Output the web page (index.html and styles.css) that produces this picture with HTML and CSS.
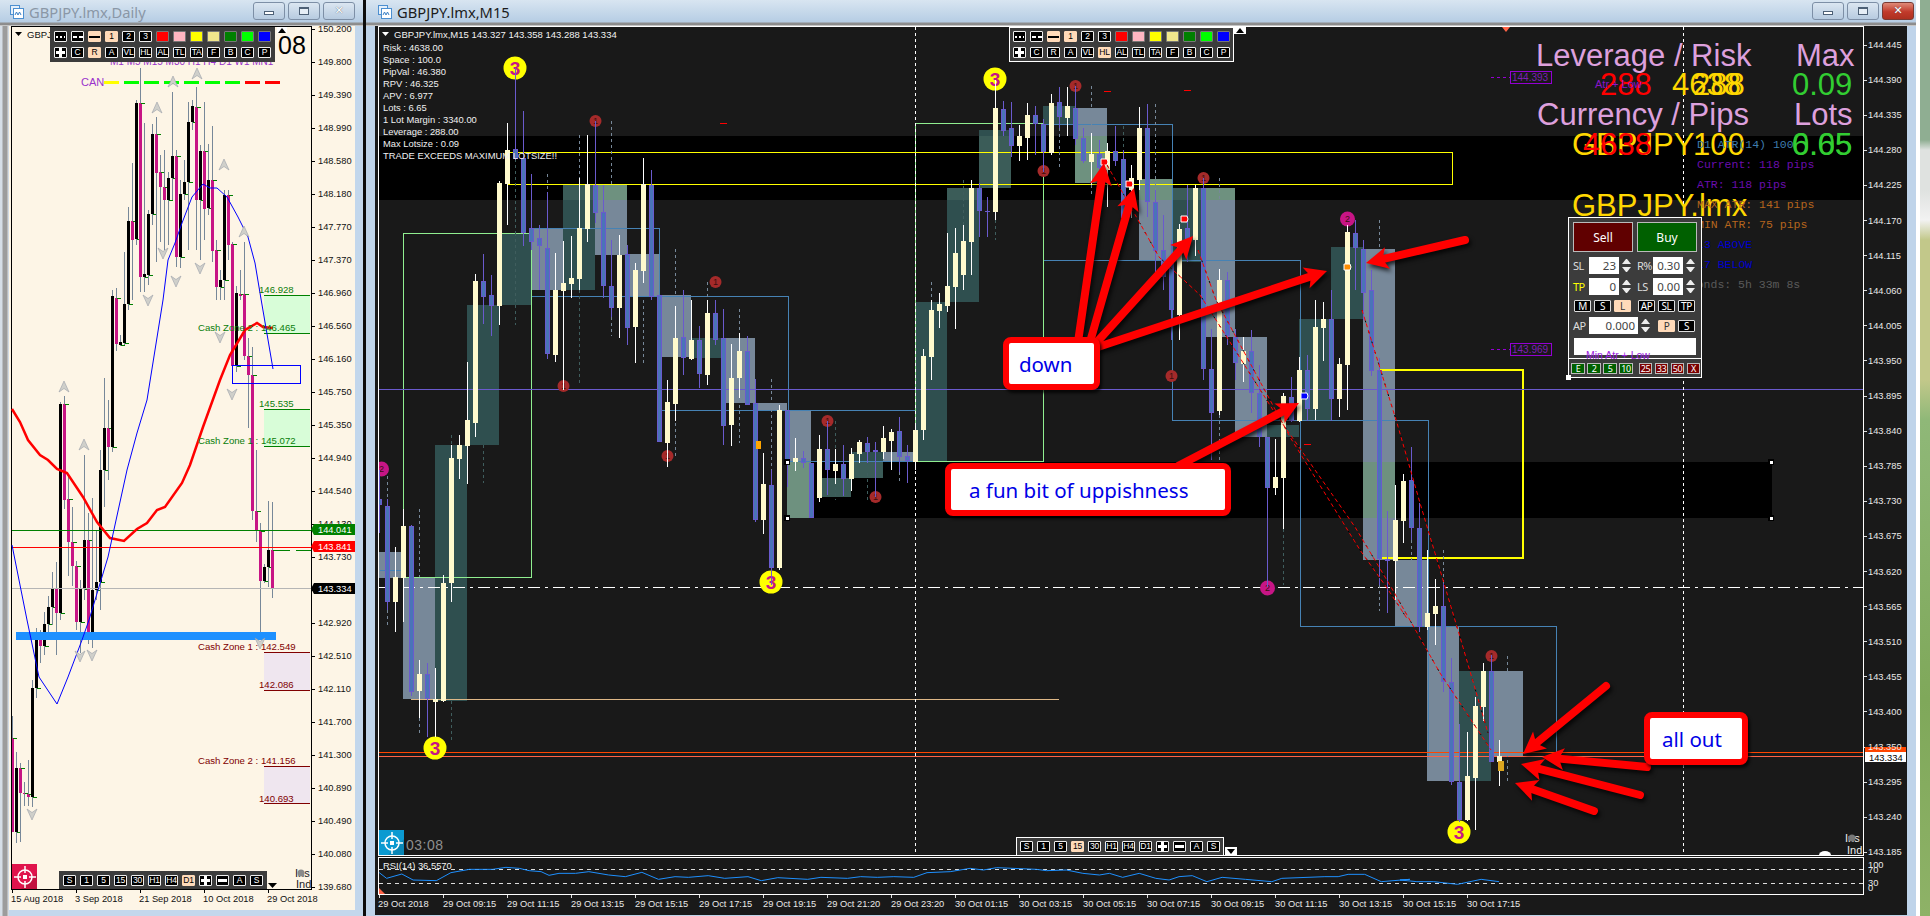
FILE: index.html
```html
<!DOCTYPE html>
<html lang="en">
<head>
<meta charset="utf-8">
<title>GBPJPY charts</title>
<link rel="stylesheet" href="styles.css">
</head>
<body>
<div class="desktop">
  <section class="win win-left">
    <header class="title inactive">
      <svg class="win-icon" viewBox="0 0 14 14"><rect x="0.5" y="0.5" width="9" height="9" class="ic-back"/><rect x="3.5" y="3.5" width="10" height="10" class="ic-front"/><path d="M5 10l1.500-3 1.500 3 1.500-3 1.500 3" class="ic-line"/></svg>
      <span class="title-text">GBPJPY.lmx,Daily</span>
      <div class="wbtns">
        <button class="wbtn"><i class="g-min"></i></button>
        <button class="wbtn"><i class="g-max"></i></button>
        <button class="wbtn"><i class="g-x">✕</i></button>
      </div>
    </header>
    <div class="client client-left">
      <svg id="daily" width="346" height="884" viewBox="9 26 346 884"></svg>
      <div class="tb tb-d-top">
        <span class="k"><i class="ln-dot"></i></span><span class="k"><i class="ln-dash"></i></span><span class="k on"><i class="ln-solid"></i></span><span class="k on">1</span><span class="k">2</span><span class="k">3</span><span class="k c-red"></span><span class="k c-pink"></span><span class="k c-yel"></span><span class="k c-kha"></span><span class="k c-grn"></span><span class="k c-lim"></span><span class="k c-blu"></span>
        <span class="k"><i class="plus"></i></span><span class="k">C</span><span class="k on">R</span><span class="k">A</span><span class="k">VL</span><span class="k">HL</span><span class="k">AL</span><span class="k">TL</span><span class="k">TA</span><span class="k">F</span><span class="k">B</span><span class="k">C</span><span class="k">P</span>
      </div>
      <div class="tb tb12 tb-d-bot">
        <span class="k">S</span><span class="k">1</span><span class="k">5</span><span class="k">15</span><span class="k">30</span><span class="k">H1</span><span class="k">H4</span><span class="k on">D1</span><span class="k"><i class="plus"></i></span><span class="k"><i class="minus"></i></span><span class="k">A</span><span class="k">S</span>
      </div>
    </div>
  </section>
  <div class="gap"></div>
  <section class="win win-right">
    <header class="title">
      <svg class="win-icon" viewBox="0 0 14 14"><rect x="0.5" y="0.5" width="9" height="9" class="ic-back"/><rect x="3.5" y="3.5" width="10" height="10" class="ic-front"/><path d="M5 10l1.500-3 1.500 3 1.500-3 1.500 3" class="ic-line"/></svg>
      <span class="title-text">GBPJPY.lmx,M15</span>
      <div class="wbtns">
        <button class="wbtn"><i class="g-min"></i></button>
        <button class="wbtn"><i class="g-max"></i></button>
        <button class="wbtn close"><i class="g-x">✕</i></button>
      </div>
    </header>
    <div class="client client-right">
      <svg id="main" width="1532" height="889" viewBox="375 26 1532 889"></svg>

      <div class="tb tb-bordered tb-m-top">
        <span class="k"><i class="ln-dot"></i></span><span class="k"><i class="ln-dash"></i></span><span class="k on"><i class="ln-solid"></i></span><span class="k on">1</span><span class="k">2</span><span class="k">3</span><span class="k c-red"></span><span class="k c-pink"></span><span class="k c-yel"></span><span class="k c-kha"></span><span class="k c-grn"></span><span class="k c-lim"></span><span class="k c-blu"></span>
        <span class="k"><i class="plus"></i></span><span class="k">C</span><span class="k">R</span><span class="k">A</span><span class="k">VL</span><span class="k on">HL</span><span class="k">AL</span><span class="k">TL</span><span class="k">TA</span><span class="k">F</span><span class="k">B</span><span class="k">C</span><span class="k">P</span>
      </div>
      <div class="tb tb12 tb-bordered tb-m-bot">
        <span class="k">S</span><span class="k">1</span><span class="k">5</span><span class="k on">15</span><span class="k">30</span><span class="k">H1</span><span class="k">H4</span><span class="k">D1</span><span class="k"><i class="plus"></i></span><span class="k"><i class="minus"></i></span><span class="k">A</span><span class="k">S</span>
      </div>

      <div class="panel">
        <div class="p-actions">
          <button class="p-act sell">Sell</button>
          <button class="p-act buy">Buy</button>
        </div>
        <div class="p-spins">
          <span class="p-lab">SL</span><span class="p-in">23</span><i class="spin"></i>
          <span class="p-lab p-lab2">R%</span><span class="p-in">0.30</span><i class="spin"></i>
        </div>
        <div class="p-spins">
          <span class="p-lab p-yel">TP</span><span class="p-in">0</span><i class="spin"></i>
          <span class="p-lab p-lab2">LS</span><span class="p-in">0.00</span><i class="spin"></i>
        </div>
        <div class="p-modes">
          <span class="pk">M</span><span class="pk">S</span><span class="pk on">L</span>
          <span class="pk gap-l">AP</span><span class="pk">SL</span><span class="pk">TP</span>
        </div>
        <div class="p-spins p-ap">
          <span class="p-lab">AP</span><span class="p-in wide">0.000</span><i class="spin"></i>
          <span class="pk on gap-l2">P</span><span class="pk">S</span>
        </div>
        <div class="p-bar"></div>
        <div class="p-closes">
          <span class="pc g">E</span><span class="pc g">2</span><span class="pc g">5</span><span class="pc g">10</span>
          <span class="pc r gap-l3">25</span><span class="pc r">33</span><span class="pc r">50</span><span class="pc r">X</span>
        </div>
        <span class="p-min">Min Atr + Low</span>
        <i class="p-handle"></i>
      </div>

      <div class="callout c-down">down</div>
      <div class="callout c-fun">a fun bit of uppishness</div>
      <div class="callout c-out">all out</div>
    </div>
  </section>
  <div class="photo"></div>
</div>
<script src="chart.js"></script>
</body>
</html>
```
FILE: styles.css
```css
* { box-sizing: border-box; }
html, body { margin: 0; height: 100%; background: #000; }
body { overflow: hidden; font-family: "Liberation Sans", Arial, sans-serif; }

.desktop { display: flex; width: 1930px; height: 916px; overflow: hidden; }
.gap { width: 3px; background: #0c0c0c; }
.win { display: flex; flex-direction: column; background: #c3d7ec; height: 916px; }
.win-left { width: 363px; padding: 0 8px 6px 9px; background: linear-gradient(90deg, #d6dee7 0 2px, #9c9c9c 3px 7px, #dcdcdc 8px, #c3d7ec 9px); }
.win-right { padding: 0 9px 1px 9px; background: #bfd4ea; border-right: 4px solid #fff; width: 1554px; }
.photo { flex: 1; background: linear-gradient(180deg, #8fae92 0 140px, #dfe2e0 150px 190px, #f2f2f2 220px, #c2c88a 240px 380px, #8fb878 420px, #7fa85a 700px, #8eb267 916px); }

.title { height: 26px; margin: 0 -9px; padding: 0 8px 3px 10px; display: flex; align-items: center; gap: 5px; background: linear-gradient(180deg, #d8e5f1 0, #b6cde4 22px, #8f8f8f 23px, #8a8a8a 25px, #fff 26px); }
.win-left .title { margin-right: -8px; }
.win-right .title { padding: 0 2px 3px 12px; }
.win-icon { width: 14px; height: 14px; flex: none; }
.ic-back { fill: #e6f0fa; stroke: #4c8fd0; }
.ic-front { fill: #fff; stroke: #4c8fd0; }
.ic-line { fill: none; stroke: #3a7fc4; stroke-width: 1; }
.title-text { font: 14.7px "Noto Sans", sans-serif; color: #1c1c1c; }
.inactive .title-text { color: #8a97a6; }
.wbtns { margin-left: auto; display: flex; gap: 3px; padding-bottom: 1px; }
.wbtn { width: 32px; height: 18px; padding: 0; border: 1px solid #7d8fa6; border-radius: 3px; background: linear-gradient(180deg, #dbe6f1, #b7cbe0); display: flex; align-items: center; justify-content: center; }
.wbtn.close { background: linear-gradient(180deg, #df8a78, #c13a2b 55%, #ad3020); border-color: #7a3a33; }
.wbtn i { display: block; font-style: normal; }
.g-min { width: 10px; height: 4px; margin-top: 4px; background: #fff; border: 1px solid #4d6076; }
.g-max { width: 10px; height: 8px; background: #e6eef6; border: 1px solid #4d6076; border-top-width: 2px; }
.g-x { font: bold 11px "DejaVu Sans", sans-serif; color: #fff; text-shadow: 0 0 1px #39475a; line-height: 12px; }

.client { position: relative; flex: none; overflow: hidden; }
.client svg { display: block; }
.client-left { width: 346px; height: 884px; background: #fdf5e6; }
.client-right { width: 1532px; height: 889px; background: #191919; }

/* SVG chart text */
#daily text, #main text { font-family: "Liberation Sans", Arial, sans-serif; font-size: 9.3px; }
.sh { shape-rendering: crispEdges; }
#daily .ax { fill: #111; }
#main .ax { fill: #e9e9e9; }
#daily .ax-tag { fill: #fff; }
#main .ax-tag { fill: #000; }
#main text.t-head { fill: #f2f2f2; font-size: 9.5px; }
#daily text.t-head { fill: #111; font-size: 9.5px; }
#main text.t-info { fill: #f0f0f0; font-size: 9.4px; }
#daily text.zg { fill: #0a7d0a; font-size: 9.6px; }
#daily text.zr { fill: #800000; font-size: 9.6px; }
#daily text.t-can { fill: #9932cc; font-size: 11px; }
#daily text.t-tf { fill: #9932cc; font-size: 10px; }
#daily text.t-clock { fill: #000; font-size: 25px; }
#main text.t-big { font-size: 31px; }
.pl { fill: #dda0dd; }
.re { fill: #ff0000; }
.go { fill: #ffd700; }
.gr { fill: #32cd32; }
#main text.t-mono { font-family: "Liberation Mono", monospace; font-size: 11.5px; }
.m-steel { fill: #3f7cad; }
.m-vio { fill: #6a0dad; }
.m-sie { fill: #b5651d; }
.m-blu { fill: #0000cd; }
.m-gry { fill: #5a5a5a; }
#main text.t-pur { fill: #8a16c9; font-size: 11px; }
#main text.t-box { fill: #7d1fb5; font-size: 10px; }
#main text.t-clock { fill: #8f8f8f; font-size: 14px; letter-spacing: 0.5px; }
#main text.t-3, #main text.t-1 { text-anchor: middle; }
#main text.t-3 { fill: #c71585; font-size: 19px; font-weight: bold; }
#main text.t-1 { fill: #3a1010; font-size: 9px; }
#main text.t-ins { fill: #eee; font-size: 11px; }
#daily text.t-ins { fill: #222; font-size: 11px; }
.arrows { filter: drop-shadow(2px 3px 2px rgba(0, 0, 0, 0.75)); }

/* Toolbars */
.tb { position: absolute; display: grid; grid-template-columns: repeat(13, 13px); grid-auto-rows: 11px; gap: 5px 4px; padding: 4px 4px; background: #3c3c3c; }
.tb12 { grid-template-columns: repeat(12, 13px); padding: 4px 4px 3px; }
.tb-bordered { border: 1px solid #fff; border-top-width: 1px; padding: 3px 3px; }
.tb-d-top { left: 41px; top: 1px; }
.tb-d-bot { left: 50px; top: 845px; }
.tb-m-top { left: 634px; top: 1px; }
.tb-m-bot { left: 641px; top: 811px; height: 18px; border-bottom: 0; grid-auto-rows: 11px; }
.k { display: flex; align-items: center; justify-content: center; background: #000; border: 1px solid #eee; border-radius: 1px; color: #fff; font: 8.5px/1 "Liberation Sans", sans-serif; overflow: hidden; white-space: nowrap; letter-spacing: -0.3px; }
.k.on { background: #ffdab9; color: #000; border-color: #ffdab9; }
.c-red { background: #f00; border-color: #777; }
.c-pink { background: #ffb6c1; border-color: #777; }
.c-yel { background: #ff0; border-color: #777; }
.c-kha { background: #f0e68c; border-color: #777; }
.c-grn { background: #008000; border-color: #777; }
.c-lim { background: #0f0; border-color: #777; }
.c-blu { background: #00f; border-color: #777; }
.k i { display: block; }
.ln-dot { width: 9px; height: 2px; background: repeating-linear-gradient(90deg, #fff 0 2px, transparent 2px 4px); }
.ln-dash { width: 10px; height: 2px; background: repeating-linear-gradient(90deg, #fff 0 4px, transparent 4px 6px); }
.ln-solid { width: 11px; height: 2px; background: #000; }
.plus { width: 9px; height: 9px; background: linear-gradient(#fff, #fff) center / 9px 3px no-repeat, linear-gradient(#fff, #fff) center / 3px 9px no-repeat; }
.minus { width: 9px; height: 3px; background: #fff; }

/* Trade panel */
.panel { position: absolute; left: 1193px; top: 191px; width: 134px; height: 161px; background: #3c3c3c; border: 1px solid #fff; padding: 4px 0 0 4px; color: #ddd; font: 11.5px "Noto Sans", sans-serif; }
.p-actions { display: flex; gap: 4px; }
.p-act { width: 60px; height: 30px; border: 1px solid #bbb; padding: 0; color: #fff; font: 12px "Noto Sans", sans-serif; }
.sell { background: #600000; }
.buy { background: #006000; }
.p-spins { display: flex; align-items: center; height: 17px; margin-top: 4px; }
.p-spins:nth-child(2) { margin-top: 5px; }
.p-lab { width: 16px; font-size: 11px; letter-spacing: -0.5px; flex: none; }
.p-lab2 { margin-left: 6px; }
.p-yel { color: #ff0; }
.p-in { width: 30px; height: 17px; background: #fff; color: #444; text-align: right; padding-right: 3px; line-height: 17px; flex: none; }
.p-in.wide { width: 49px; }
.spin { flex: none; width: 9px; height: 13px; margin-left: 3px; display: flex; flex-direction: column; justify-content: space-between; }
.spin::before, .spin::after { content: ""; border-left: 4.5px solid transparent; border-right: 4.5px solid transparent; }
.spin::before { border-bottom: 5px solid #eee; }
.spin::after { border-top: 5px solid #eee; }
.p-modes { display: flex; gap: 3px; height: 12px; margin: 5px 0 0 1px; }
.pk { flex: none; width: 17px; height: 12px; background: #000; border: 1px solid #ddd; border-radius: 1px; color: #fff; font: 10px/10px "Noto Sans", sans-serif; text-align: center; letter-spacing: -0.4px; }
.pk.on { background: #ffdab9; color: #333; border-color: #ffdab9; }
.gap-l { margin-left: 4px; }
.p-ap { margin-top: 5px; }
.gap-l2 { margin-left: 8px; margin-right: 3px; }
.p-bar { width: 122px; height: 17px; margin: 4px 0 0 1px; background: #fff; }
.p-closes { display: flex; gap: 2px; height: 16px; margin: 3px 0 0 -4px; padding: 4px 0 0 2px; border-top: 1px solid #fff; width: 133px; }
.pc { flex: none; width: 14px; height: 11px; border: 1px solid #bbb; color: #fff; font: 9px/9px "Noto Sans", sans-serif; text-align: center; letter-spacing: -0.4px; }
.pc.g { background: #006000; }
.pc.r { background: #7a0000; width: 13px; margin-right: 1px; }
.gap-l3 { margin-left: 4px; }
.p-min { position: absolute; left: 17px; top: 131px; color: #9d22e0; font: 10.5px "Liberation Sans", sans-serif; }
.p-handle { position: absolute; left: -3px; bottom: -3px; width: 5px; height: 5px; background: #fff; }

/* Callouts */
.callout { position: absolute; display: flex; align-items: center; height: 53px; background: #fff; border: 6px solid #f00; border-radius: 8px; color: #0000e6; font: 20.5px "Noto Sans", sans-serif; box-shadow: 2px 3px 3px rgba(0, 0, 0, 0.7); white-space: nowrap; }
.c-down { left: 628px; top: 311px; width: 97px; padding-left: 10px; }
.c-fun { left: 570px; top: 437px; width: 286px; padding-left: 18px; }
.c-out { left: 1269px; top: 686px; width: 104px; padding-left: 12px; }
```
FILE: chart.js
```js
const NS = 'http://www.w3.org/2000/svg';
function S(p, tag, a, txt) {
  const e = document.createElementNS(NS, tag);
  for (const k in a) e.setAttribute(k, a[k]);
  if (txt !== undefined) e.textContent = txt;
  p.appendChild(e);
  return e;
}
const rect = (p, x1, y1, x2, y2, fill) => S(p, 'rect', { x: x1, y: y1, width: x2 - x1, height: y2 - y1, fill });
const line = (p, x1, y1, x2, y2, stroke, extra) => S(p, 'line', Object.assign({ x1, y1, x2, y2, stroke, 'stroke-width': 1 }, extra || {}));
const poly = (p, pts, fill, extra) => S(p, 'polygon', Object.assign({ points: pts.map(a => a.join(',')).join(' '), fill }, extra || {}));
const path = (p, pts, stroke, w, extra) => S(p, 'polyline', Object.assign({ points: pts.map(a => a.join(',')).join(' '), fill: 'none', stroke, 'stroke-width': w }, extra || {}));
const txt = (p, x, y, s, cls) => S(p, 'text', { x, y, class: cls }, s);
const dash = (p, x, y1, y2, c) => line(p, x, y1, x, y2, c || '#778899', { 'stroke-dasharray': '3 3' });

function logo(p, x, y, bg, shade) {
  rect(p, x, y, x + 25, y + 25, bg);
  poly(p, [[x + 25, y + 9], [x + 25, y + 25], [x + 9, y + 25]], shade);
  const cx = x + 13, cy = y + 13;
  S(p, 'circle', { cx, cy, r: 7, fill: 'none', stroke: '#fff', 'stroke-width': 1.5 });
  [[0, -11, 0, -4], [0, 4, 0, 11], [-11, 0, -4, 0], [4, 0, 11, 0]].forEach(d => line(p, cx + d[0], cy + d[1], cx + d[2], cy + d[3], '#fff', { 'stroke-width': 1.5 }));
  rect(p, cx - 2, cy - 2, cx + 2, cy + 2, '#fff');
}

/* ------------------------ Daily chart ------------------------ */
(function daily() {
  const svg = document.getElementById('daily');
  const crisp = S(svg, 'g', { class: 'sh' });

  // cash zones
  [[295, 333, '#d8fdd8', '#008000'], [409, 446, '#d8fdd8', '#008000'], [652, 690, '#efe6ef', '#800000'], [766, 803, '#efe6ef', '#800000']].forEach(z => {
    rect(crisp, 264, z[0], 310, z[1], z[2]);
    line(crisp, 264, z[0] + .5, 310, z[0] + .5, z[3]);
    line(crisp, 264, z[1] + .5, 310, z[1] + .5, z[3]);
  });

  // candles
  const L = [
    ['M',738,832,716,832],['K',768,832,752,843],['M',768,793,763,842],['M',793,794,782,806],['M',794,797,760,806],
    ['K',688,797,680,807],['K',639,688,628,698],['M',639,646,630,663],['K',624,646,612,655],['K',607,624,596,640],
    ['K',588,607,572,625],['M',588,613,562,655],['K',404,613,402,620],['M',404,500,396,509],['M',499,542,477,576],
    ['M',542,566,507,586],['M',566,622,561,630],['K',589,622,580,653],['K',540,589,455,600],['M',540,632,513,644],
    ['K',590,632,498,648],['K',582,590,530,600],['K',470,582,450,610],['K',428,470,378,507],['M',428,447,400,480],
    ['K',296,447,290,452],['M',298,344,288,351],['K',342,345,335,346],['K',304,343,252,345],['K',221,304,207,310],
    ['M',221,240,163,300],['K',103,239,100,245],['M',103,277,68,292],['K',274,277,123,292],['K',214,275,210,285],
    ['K',134,214,124,225],['M',134,173,117,262],['M',172,187,155,242],['M',187,200,150,250],['K',178,200,172,245],
    ['K',156,178,92,200],['M',156,257,150,267],['K',194,257,180,268],['K',182,194,160,200],['K',122,182,102,250],
    ['K',106,122,100,130],['M',107,200,87,250],['K',151,200,145,260],['M',151,209,102,240],['K',180,208,144,215],
    ['M',180,251,126,262],['M',250,287,240,300],['K',280,287,270,300],['K',195,280,190,300],['M',195,245,190,260],
    ['M',244,366,242,370],['K',293,366,286,372],['M',294,296,270,300],['M',294,356,242,360],['M',356,375,338,428],
    ['M',375,511,347,520],['M',511,531,450,542],['M',531,581,523,635],['K',567,581,564,583],['K',550,567,501,587],
    ['M',550,588,502,598]
  ];
  L.forEach((c, i) => {
    const x = 12 + 4 * i;
    line(crisp, x + .5, c[3], x + .5, c[4], '#778899');
    rect(crisp, x - 1, c[1], x + 2, c[2], c[0] === 'K' ? '#000' : '#c71585');
    const ty = c[0] === 'K' ? c[2] : c[1];
    line(crisp, x + 1, ty + .5, x + 5, ty + .5, '#008000');
  });

  // horizontal lines
  line(crisp, 11, 530.5, 311, 530.5, '#008000');
  line(crisp, 11, 547.5, 311, 547.5, '#ff0000');
  line(crisp, 11, 588.5, 311, 588.5, '#b5b5b5');
  line(crisp, 273, 550.5, 290, 550.5, '#008000');
  line(crisp, 296, 550.5, 311, 550.5, '#008000');
  rect(crisp, 16, 632, 276, 640, '#1e90ff');

  // moving averages
  path(svg, [[12,409],[20,422],[28,440],[40,455],[48,460],[57,469],[67,473],[83,497],[97,522],[110,538],[124,541],[137,529],[147,523],[157,510],[165,507],[182,483],[190,465],[203,427],[220,380],[230,355],[245,330],[257,323],[263,327],[273,328]], '#ff0000', 2.5);
  path(svg, [[12,545],[27,620],[39,677],[57,704],[68,677],[82,640],[89,620],[108,557],[127,470],[137,433],[147,400],[163,300],[168,260],[175,243],[182,223],[192,197],[203,184],[210,188],[217,188],[227,197],[238,217],[248,237],[255,263],[260,293],[273,369]], '#0000ff', 1);
  S(svg, 'rect', { x: 232.5, y: 365.5, width: 68, height: 18, fill: 'none', stroke: '#0000ff', 'stroke-width': 1 });

  // signal markers
  const mark = (x, y, up) => {
    const s = up ? 1 : -1;
    poly(svg, [[x, y - 6 * s], [x + 5, y + 5 * s], [x, y + 1.5 * s], [x - 5, y + 5 * s]], '#cfcfca', { stroke: '#9aa0aa', 'stroke-width': .6 });
  };
  [[157,108],[197,74],[173,82],[224,165],[244,232],[64,387],[84,445]].forEach(m => mark(m[0], m[1], true));
  [[163,253],[200,268],[176,281],[148,300],[220,337],[232,394],[32,814],[80,656],[92,655],[260,643]].forEach(m => mark(m[0], m[1], false));

  // zone labels
  [[259,293,'146.928','zg'],[198,331,'Cash Zone 2 : 146.465','zg'],[259,407,'145.535','zg'],[198,444,'Cash Zone 1 : 145.072','zg'],
   [198,650,'Cash Zone 1 : 142.549','zr'],[259,688,'142.086','zr'],[198,764,'Cash Zone 2 : 141.156','zr'],[259,802,'140.693','zr']].forEach(t => txt(svg, t[0], t[1], t[2], t[3]));

  // header
  S(svg, 'polygon', { points: '15,32 22,32 18.500,36', fill: '#000' });
  txt(svg, 27, 38, 'GBPJPY.lmx,Daily  143.327 144.390 143.214 143.334', 't-head');
  txt(svg, 110, 65, 'M1 M5 M15 M30    H1    H4    D1    W1 MN1', 't-tf');
  txt(svg, 81, 86, 'CAN', 't-can');
  ['#ff0','#0f0','#0f0','#0f0','#0f0','#0f0','#0f0','#f00','#f00'].forEach((c, i) => rect(crisp, 104 + 20.1 * i, 81, 119 + 20.1 * i, 84, c));
  txt(svg, 278, 54, '08', 't-clock');
  rect(crisp, 277, 27, 287, 33, '#fff');
  poly(svg, [[278, 33], [286, 33], [282, 28]], '#000');

  // frame + axis
  S(crisp, 'rect', { x: 11.5, y: 26.5, width: 300, height: 863, fill: 'none', stroke: '#000' });
  const prices = ['150.200','149.800','149.390','148.990','148.580','148.180','147.770','147.370','146.960','146.560','146.160','145.750','145.350','144.940','144.540','144.130','143.730','143.320','142.920','142.510','142.110','141.700','141.300','140.890','140.490','140.080','139.680'];
  prices.forEach((p, i) => {
    const y = 28.5 + 33 * i;
    line(crisp, 312, Math.round(y) + .5, 315, Math.round(y) + .5, '#000');
    txt(svg, 318, y + 3.5, p, 'ax');
  });
  const tag = (y1, y2, c, s) => {
    poly(svg, [[311, (y1 + y2) / 2], [314, y1], [355, y1], [355, y2], [314, y2]], c);
    txt(svg, 318, y2 - 2.5, s, 'ax-tag');
  };
  tag(524, 535, '#008000', '144.041');
  tag(541, 552, '#ff0000', '143.841');
  tag(583, 594, '#000000', '143.334');
  [['15 Aug 2018',11,12],['3 Sep 2018',75,76],['21 Sep 2018',139,140],['10 Oct 2018',203,204],['29 Oct 2018',267,268]].forEach(t => {
    line(crisp, t[2] + .5, 890, t[2] + .5, 893, '#000');
    txt(svg, t[1], 902, t[0], 'ax');
  });

  logo(svg, 12, 864, '#e0144c', '#c2123f');
  poly(svg, [[268, 883], [277, 883], [272.5, 888]], '#000');
  txt(svg, 295, 877, 'Ins', 't-ins');
  txt(svg, 296, 888, 'Ind', 't-ins');
  S(svg, 'circle', { cx: 301, cy: 873, r: 3.5, fill: '#8a8a8a' });
})();

/* ------------------------ M15 chart ------------------------ */
(function main() {
  const svg = document.getElementById('main');
  const defs = S(svg, 'defs', {});
  const cp = S(defs, 'clipPath', { id: 'plot' });
  S(cp, 'rect', { x: 379, y: 27, width: 1484, height: 828 });
  const plot = S(svg, 'g', { 'clip-path': 'url(#plot)' });
  const crisp = S(plot, 'g', { class: 'sh' });

  const bands = [[378, 136, 1863, 200], [787, 462, 1772, 518]];
  bands.forEach(b => rect(crisp, b[0], b[1], b[2], b[3], '#000'));

  // supply / demand zones: G = slate, T = dark teal
  const Z = [
    ['T',435,445,467,701],['T',467,305,499,445],['T',499,233,531,305],['T',563,185,595,290],['T',979,130,1011,188],
    ['T',947,188,979,302],['T',915,302,947,462],['T',1043,106,1075,124],['T',1172,188,1203,262],['T',691,338,723,358],
    ['T',819,478,851,497],['T',851,452,883,478],['T',1267,425,1299,437],['T',1299,319,1331,421],['T',1331,247,1363,319],
    ['T',1459,671,1491,781],
    ['G',379,552,403,578],['G',403,578,435,699],['G',531,228,563,290],['G',595,185,627,255],['G',627,254,659,297],
    ['G',659,295,691,357],['G',722,338,755,403],['G',755,403,787,410],['G',787,410,811,518],['G',883,452,915,462],
    ['G',1075,108,1107,183],['G',1139,179,1172,260],['G',1203,188,1235,337],['G',1235,337,1267,437],['G',1363,249,1395,560],
    ['G',1395,560,1427,627],['G',1427,627,1459,781],['G',1491,671,1523,757]
  ];
  Z.forEach(z => {
    rect(crisp, z[1], z[2], z[3], z[4], z[0] === 'G' ? '#778899' : '#2f4f4f');
    bands.forEach(b => {
      const x1 = Math.max(z[1], b[0]), x2 = Math.min(z[3], b[2]), y1 = Math.max(z[2], b[1]), y2 = Math.min(z[4], b[3]);
      if (x2 > x1 && y2 > y1) rect(crisp, x1, y1, x2, y2, z[0] === 'G' ? '#6e917f' : '#3b5c58');
    });
  });

  // outlined boxes
  const g = '#90ee90', b = '#4682b4';
  const box = (x1, y1, x2, y2, c, w) => S(crisp, 'rect', { x: x1 + .5, y: y1 + .5, width: x2 - x1, height: y2 - y1, fill: 'none', stroke: c, 'stroke-width': w || 1 });
  const lines = [
    [531,228,659,228],[659,228,659,410],[531,296,788,296],[788,296,788,461],[659,410,915,410],[788,461,915,461],[379,570,403,570],
    [1043,124,1172,124],[1172,124,1172,420],[1043,260,1300,260],[1300,260,1300,626],[1172,420,1428,420],[1428,420,1428,757],
    [1300,626,1556,626],[1556,626,1556,756],[1428,756,1556,756]
  ];
  lines.forEach(l => line(crisp, l[0] + .5, l[1] + .5, l[2] + .5, l[3] + .5, b));
  box(403, 233, 531, 577, g);
  box(915, 123, 1043, 461, g);
  box(507, 152, 1452, 184, '#ffff00');
  S(crisp, 'rect', { x: 1381, y: 370, width: 142, height: 188, fill: 'none', stroke: '#ffff00', 'stroke-width': 2 });
  line(crisp, 411, 699.5, 1059, 699.5, '#deb887');
  line(crisp, 378, 389.5, 1863, 389.5, '#6a5acd');
  line(crisp, 378, 752.5, 1863, 752.5, '#ff4500');
  line(crisp, 378, 756.5, 1863, 756.5, '#ff6347');
  line(crisp, 378, 587.5, 1863, 587.5, '#fff', { 'stroke-dasharray': '12 5 3 5' });
  [[915.5],[1683.5]].forEach(v => line(crisp, v[0], 27, v[0], 895, '#fff', { 'stroke-dasharray': '3 3' }));

  // wick continuation dashes
  const T = '#3f5d5d';
  [[515.5,159,233,T],[547.5,174,192],[579.5,135,178],[611.5,121,184],[675.5,249,297],[707.5,282,300],[579.5,290,383,T],[611.5,317,336],[643.5,300,363],
   [515.5,233,325,T],[707.5,375,385,T],[739.5,309,443],[771.5,379,470],[675.5,423,456],[835.5,421,500,T],[867.5,473,500,T],[899.5,472,482],[451.5,435,445,T],
   [483.5,445,483,T],[419.5,509,577],[387.5,470,499],[387.5,610,628],[419.5,718,735],[451.5,701,740,T],[1091.5,86,133],[1091.5,185,197],[1155.5,104,190],
   [1219.5,178,269],[1379.5,220,248],[963.5,180,225,T],[995.5,220,240,T],[931.5,282,300],[1059.5,128,170],[1123.5,126,150,T],[1251.5,330,350],[1219.5,415,460],
   [1283.5,529,585,T],[1379.5,585,611],[1443.5,550,606],[1411.5,540,565],[1507.5,656,671],[1507.5,700,783]].forEach(d => dash(crisp, d[0], d[1], d[2], d[3]));

  // numbered circles (drawn under the wicks)
  [[595,121],[715,282],[1075,86],[1043,171],[1203,178],[563,386],[667,456],[827,421],[875,497],[1171,376],[1491,656]].forEach(c => {
    S(plot, 'circle', { cx: c[0] + .5, cy: c[1], r: 6, fill: '#a52a2a' });
    txt(plot, c[0] + .5, c[1] + 3, '1', 't-1');
  });
  [[1347,219],[1267,588],[381,469]].forEach(c => {
    S(plot, 'circle', { cx: c[0] + .5, cy: c[1], r: 7.5, fill: '#c71585' });
    txt(plot, c[0] + .5, c[1] + 3, '2', 't-1');
  });
  [[515,68],[995,79],[771,582],[435,748],[1459,832]].forEach(c => {
    S(plot, 'circle', { cx: c[0], cy: c[1], r: 11.5, fill: '#ffff00' });
    txt(plot, c[0], c[1] + 7, '3', 't-3');
  });

  // candles: W = up, B = down [bodyTop, bodyBottom, wickTop, wickBottom]
  const C = `B 499 505 470 533|B 506 602 499 610|W 577 602 547 632|W 526 578 509 622|B 526 692 525 696|W 674 691 660 718|B 674 699 663 737|W 699 702 668 737|W 583 701 575 702|W 458 583 445 602|W 445 459 435 479|W 420 446 362 484|W 281 423 274 437|B 281 297 254 324|B 295 306 275 336|W 183 306 181 325|W 150 184 123 225|B 149 159 68 160|B 158 233 111 246|B 228 242 174 250|B 238 246 225 290|B 248 354 192 359|W 290 355 253 362|W 283 291 241 390|W 278 284 236 298|W 228 279 178 290|W 184 229 135 242|B 185 213 121 223|B 212 286 185 298|B 286 308 240 317|W 255 308 235 338|B 254 328 245 345|W 270 327 263 363|W 184 271 158 283|B 185 297 170 300|B 295 442 295 442|W 402 443 380 467|W 338 404 306 421|B 337 358 290 375|W 340 359 300 360|B 340 374 326 388|W 313 375 300 385|B 313 340 300 345|B 338 426 309 445|W 378 425 344 446|W 351 378 333 398|B 351 405 336 405|B 403 520 379 522|W 484 520 453 534|B 485 568 470 585|W 410 568 405 570|B 410 462 410 487|W 458 462 438 471|B 458 463 451 468|B 463 518 463 518|W 449 498 435 502|B 449 470 421 495|W 464 471 449 484|B 464 479 445 496|W 454 479 448 491|W 442 454 440 463|B 443 452 437 463|B 450 452 442 497|W 438 452 426 459|W 432 441 429 470|B 431 457 417 472|B 456 461 445 483|W 430 462 426 470|W 356 430 349 440|W 310 357 300 380|W 304 311 293 328|W 286 306 233 312|W 253 287 228 329|W 241 275 225 290|W 188 242 180 275|B 188 211 183 237|B 211 212 197 237|W 108 212 80 220|B 109 131 101 136|B 128 146 102 157|W 136 146 125 161|W 115 138 103 160|B 115 124 106 155|B 124 152 119 172|W 103 153 94 155|B 102 117 87 128|W 106 118 87 136|B 108 139 86 145|B 138 161 128 163|W 154 162 133 185|B 154 168 140 173|W 151 170 143 207|B 151 161 126 166|B 159 218 150 235|W 178 190 165 218|W 128 180 107 190|B 128 202 104 217|B 202 251 190 280|B 250 277 215 290|B 259 310 240 340|W 229 315 224 340|B 228 247 185 262|W 188 240 185 256|B 188 369 178 380|B 369 413 329 460|W 280 411 269 415|B 280 336 272 345|B 337 363 329 380|W 351 364 337 382|B 351 393 330 413|B 393 437 365 447|B 437 488 437 587|W 477 488 439 495|W 396 478 393 529|B 397 421 377 422|W 370 421 357 422|B 370 409 355 421|W 327 409 300 420|W 319 328 302 361|B 319 399 290 421|W 364 399 358 417|W 232 365 225 410|B 233 248 220 290|B 249 293 240 320|B 290 371 270 376|B 370 559 358 585|B 559 561 511 613|W 520 561 485 600|W 481 521 474 543|B 480 528 447 540|B 528 627 503 632|W 613 627 550 630|W 606 614 579 645|B 606 682 583 692|B 682 782 658 785|B 782 820 724 822|W 776 820 732 821|W 706 778 697 830|W 671 707 663 721|B 671 762 655 762|W 756 762 740 786`;
  const cg = S(plot, 'g', { class: 'sh' });
  C.split('|').forEach((s, n) => {
    const p = s.split(' ');
    const [t, b1, b2, w1, w2] = [p[0], +p[1], +p[2], +p[3], +p[4]];
    const x = 379 + 8 * n;
    line(cg, x + .5, w1, x + .5, w2, t === 'W' ? '#ffffff' : '#6a5acd');
    if (t === 'W') {
      rect(cg, x - 2, b1, x + 3, b2, '#fffacd');
    } else {
      rect(cg, x - 2, b1, x + 3, b2, '#6a5acd');
      if (b2 - b1 > 2) rect(cg, x - 1, b1 + 1, x + 2, b2 - 1, '#4a74b8');
    }
  });

  // trend lines
  const trend = pts => {
    path(plot, pts, '#000', 1, { 'stroke-dasharray': '2 9' });
    path(plot, pts, '#ff0000', 1, { 'stroke-dasharray': '4 3' });
  };
  trend([[1107,165],[1159,257],[1200,295],[1216,320],[1273,410],[1355,527],[1391,587],[1440,673],[1491,750]]);
  trend([[1198,250],[1216,300],[1290,437],[1360,550],[1387,588],[1408,620]]);
  trend([[1362,310],[1397,423],[1420,503],[1443,580],[1460,637],[1488,733]]);

  // small markers
  [[723,123],[1107,91],[1187,90],[1307,444]].forEach(m => rect(plot, m[0] - 3, m[1], m[0] + 4, m[1] + 1, '#f00'));
  [[1104,162,'#f00'],[1129,184,'#f00'],[1184,219,'#f00'],[1347,267,'#ff8c00'],[1304,396,'#00f']].forEach(m =>
    poly(plot, [[m[0] - 3, m[1] - 3], [m[0] + 3, m[1] - 3], [m[0] + 4, m[1]], [m[0] + 3, m[1] + 3], [m[0] - 3, m[1] + 3]], m[2], { stroke: '#fff', 'stroke-width': 1 }));
  rect(plot, 756, 441, 761, 449, '#ffa500');
  rect(plot, 1498, 761, 1504, 771, '#daa520');
  [[787,462],[787,518],[1771,462],[1771,518]].forEach(h => {
    rect(plot, h[0] - 3, h[1] - 3, h[0] + 3, h[1] + 3, '#000');
    rect(plot, h[0] - 1, h[1] - 1, h[0] + 2, h[1] + 2, '#fff');
  });

  // overlay texts
  const B = (x, y, s, c) => txt(plot, x, y, s, 't-big ' + c);
  B(1536, 66, 'Leverage / Risk', 'pl'); B(1796, 66, 'Max', 'pl');
  B(1600, 95, '288', 're'); B(1672, 95, '4638', 'go'); B(1693, 95, '288', 'go'); B(1792, 95, '0.09', 'gr');
  B(1537, 125, 'Currency / Pips', 'pl'); B(1794, 125, 'Lots', 'pl');
  B(1572, 155, 'GBPJPY', 'go'); B(1583, 155, '4638', 're'); B(1693, 155, '100', 'go');
  B(1792, 155, '6.65', 'gr'); B(1792, 155, '0.05', 'gr');
  B(1572, 216, 'GBPJPY.lmx', 'go');
  txt(plot, 1595, 88, 'Atr + Low', 't-pur');
  [['D1 ATR(14) 100', 148, 'm-steel'], ['Current: 118 pips', 168, 'm-vio'], ['ATR: 118 pips', 188, 'm-vio'], ['MAX ATR: 141 pips', 208, 'm-sie'], ['MIN ATR: 75 pips', 228, 'm-sie'], ['13 ABOVE', 248, 'm-blu'], ['17 BELOW', 268, 'm-blu']].forEach(t => {
    txt(plot, 1697, t[1], t[0], 't-mono ' + t[2]);
  });
  txt(plot, 1676, 288, 'Seconds: 5h 33m 8s', 't-mono m-gry');
  [[71, '144.393'], [343, '143.969']].forEach(p => {
    line(plot, 1491, p[0] + 6.5, 1510, p[0] + 6.5, '#9400d3', { 'stroke-dasharray': '3 3' });
    S(plot, 'rect', { x: 1510.5, y: p[0] + .5, width: 41, height: 12, fill: 'none', stroke: '#9400d3' });
    txt(plot, 1512, p[0] + 10, p[1], 't-box');
  });
  poly(plot, [[1502, 27], [1510, 27], [1506, 32]], '#ff6347');

  // header and info
  poly(plot, [[382, 32], [389, 32], [385.5, 36]], '#fff');
  txt(plot, 394, 38, 'GBPJPY.lmx,M15  143.327 143.358 143.288 143.334', 't-head');
  ['Risk : 4638.00', 'Space : 100.0', 'PipVal : 46.380', 'RPV : 46.325', 'APV : 6.977', 'Lots : 6.65', '1 Lot Margin : 3340.00', 'Leverage : 288.00', 'Max Lotsize : 0.09', 'TRADE EXCEEDS MAXIMUM LOTSIZE!!'].forEach((s, i) => txt(plot, 383, 51 + 12 * i, s, 't-info'));

  logo(plot, 379, 830, '#0b9ad1', '#0a86b6');
  txt(plot, 406, 850, '03:08', 't-clock');
  txt(plot, 1845, 842, 'Ins', 't-ins');
  txt(plot, 1847, 854, 'Ind', 't-ins');
  S(plot, 'circle', { cx: 1852, cy: 838, r: 3.5, fill: '#777' });
  S(plot, 'path', { d: 'M1819 855a6 4 0 0 1 12 0z', fill: '#fff' });

  // tabs on toolbars
  rect(plot, 1234, 27, 1246, 34, '#fff');
  poly(plot, [[1236, 33], [1244, 33], [1240, 28]], '#000');
  rect(plot, 1225, 847, 1237, 855, '#fff');
  poly(plot, [[1227, 849], [1235, 849], [1231, 854]], '#000');

  // red arrows
  const ag = S(svg, 'g', { class: 'arrows' });
  const arrow = (x1, y1, x2, y2) => {
    const len = Math.hypot(x2 - x1, y2 - y1), ux = (x2 - x1) / len, uy = (y2 - y1) / len, nx = -uy, ny = ux;
    const hl = 22, hw = 11, notch = 5;
    const bx = x2 - ux * hl, by = y2 - uy * hl;
    line(ag, x1, y1, x2 - ux * (hl - notch), y2 - uy * (hl - notch), '#ff0000', { 'stroke-width': 8, 'stroke-linecap': 'round' });
    poly(ag, [[x2, y2], [bx + nx * hw, by + ny * hw], [x2 - ux * (hl - notch), y2 - uy * (hl - notch)], [bx - nx * hw, by - ny * hw]], '#ff0000');
  };
  [[1078,342,1104,163],[1090,342,1134,188],[1097,342,1193,236],[1098,347,1327,271],[1465,240,1366,263],[1178,466,1299,403],
   [1606,686,1523,754],[1647,767,1542,757],[1640,795,1521,764],[1594,811,1515,783]].forEach(a => arrow(a[0], a[1], a[2], a[3]));

  // frames
  const fr = S(svg, 'g', { class: 'sh' });
  S(fr, 'rect', { x: 378.5, y: 26.5, width: 1485, height: 829, fill: 'none', stroke: '#fff' });
  S(fr, 'rect', { x: 378.5, y: 857.5, width: 1485, height: 37, fill: 'none', stroke: '#fff' });

  // RSI
  line(fr, 379, 869.5, 1863, 869.5, '#ddd', { 'stroke-dasharray': '4 4' });
  line(fr, 379, 883.5, 1863, 883.5, '#ddd', { 'stroke-dasharray': '4 4' });
  const rz = [[14,758],[25,775],[48,762],[65,780],[100,782],[122,758],[150,748],[185,748],[205,742],[225,745],[240,752],[258,755],[270,766],[285,760],[310,760],[330,755],[360,765],[385,770],[410,757],[435,778],[460,770],[480,772],[510,767],[535,775],[570,770],[590,782],[615,773],[660,778],[680,772],[720,775],[740,770],[765,772],[790,770],[820,772],[840,758],[875,755],[905,745],[925,750],[945,743],[1005,748],[1020,752],[1050,750],[1075,760],[1100,765],[1115,760],[1135,772],[1160,760],[1185,775],[1205,780],[1220,770],[1240,767],[1262,785],[1285,772],[1320,778],[1360,785],[1375,775],[1440,770],[1460,770],[1475,763],[1500,763],[1525,785],[1568,778]];
  const rp = rz.map(p => [p[0] / 1.508 + 370, p[1] / 3 + 620]);
  [[0,840],[50,845],[100,845],[170,853],[240,838],[293,845]].forEach(p => rp.push([p[0] / 2.958 + 1400, p[1] / 3 + 600]));
  path(svg, rp, '#1e90ff', 1);
  txt(svg, 383, 869, 'RSI(14) 36.5570', 't-info');
  poly(svg, [[379, 888], [385, 894], [379, 894]], '#ff6347');

  // axes
  ['144.445','144.390','144.335','144.280','144.225','144.170','144.115','144.060','144.005','143.950','143.895','143.840','143.785','143.730','143.675','143.620','143.565','143.510','143.455','143.400','143.350','143.295','143.240','143.185'].forEach((p, i) => {
    const y = 44.5 + 35.1 * i;
    line(fr, 1864, Math.round(y) + .5, 1867, Math.round(y) + .5, '#ddd');
    txt(svg, 1868, y + 3.5, p, 'ax');
  });
  rect(fr, 1865, 747, 1906, 752, '#ff4500');
  rect(fr, 1865, 752, 1906, 762, '#fff');
  txt(svg, 1869, 761, '143.334', 'ax-tag');
  [['100',1868,868],['70',1868,873],['30',1868,886],['0',1868,891]].forEach(t => txt(svg, t[1], t[2], t[0], 'ax'));
  ['29 Oct 2018','29 Oct 09:15','29 Oct 11:15','29 Oct 13:15','29 Oct 15:15','29 Oct 17:15','29 Oct 19:15','29 Oct 21:20','29 Oct 23:20','30 Oct 01:15','30 Oct 03:15','30 Oct 05:15','30 Oct 07:15','30 Oct 09:15','30 Oct 11:15','30 Oct 13:15','30 Oct 15:15','30 Oct 17:15'].forEach((s, i) => {
    const x = 379 + 64 * i;
    line(fr, x + .5, 895, x + .5, 898, '#ddd');
    txt(svg, x - 1 + (i ? 1 : 0), 907, s, 'ax');
  });
})();
```
